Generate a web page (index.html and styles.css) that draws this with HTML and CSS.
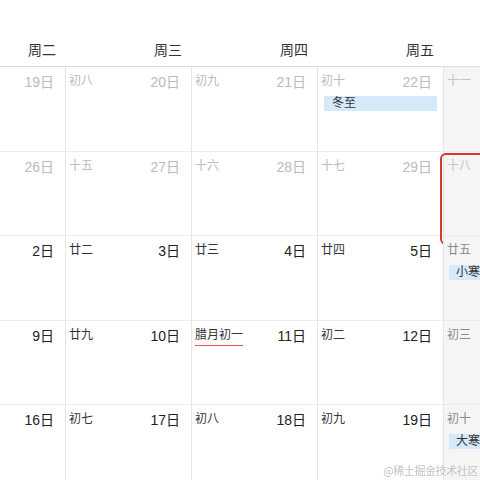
FILE: index.html
```html
<!DOCTYPE html>
<html lang="zh-CN">
  <head>
    <meta charset="UTF-8" />
    <meta name="viewport" content="width=device-width, initial-scale=1.0" />
    <title>月视图</title>
    <link rel="stylesheet" href="styles.css">
  </head>
  <body>
    <div class="calendar">
      <div class="week-head">
        <div class="head-cell">周二</div>
        <div class="head-cell">周三</div>
        <div class="head-cell">周四</div>
        <div class="head-cell">周五</div>
        <div class="head-cell"></div>
      </div>

      <div class="month-grid">
        <!-- 12月 -->
        <div class="day other"><div class="day-top"><span class="lunar"></span><span class="solar">19日</span></div></div>
        <div class="day other"><div class="day-top"><span class="lunar">初八</span><span class="solar">20日</span></div></div>
        <div class="day other"><div class="day-top"><span class="lunar">初九</span><span class="solar">21日</span></div></div>
        <div class="day other">
          <div class="day-top"><span class="lunar">初十</span><span class="solar">22日</span></div>
          <div class="event">冬至</div>
        </div>
        <div class="day other weekend"><div class="day-top"><span class="lunar">十一</span></div></div>

        <div class="day other"><div class="day-top"><span class="lunar"></span><span class="solar">26日</span></div></div>
        <div class="day other"><div class="day-top"><span class="lunar">十五</span><span class="solar">27日</span></div></div>
        <div class="day other"><div class="day-top"><span class="lunar">十六</span><span class="solar">28日</span></div></div>
        <div class="day other"><div class="day-top"><span class="lunar">十七</span><span class="solar">29日</span></div></div>
        <div class="day other weekend selected">
          <div class="day-top"><span class="lunar">十八</span></div>
          <div class="select-box"></div>
        </div>

        <!-- 1月 -->
        <div class="day"><div class="day-top"><span class="lunar"></span><span class="solar">2日</span></div></div>
        <div class="day"><div class="day-top"><span class="lunar">廿二</span><span class="solar">3日</span></div></div>
        <div class="day"><div class="day-top"><span class="lunar">廿三</span><span class="solar">4日</span></div></div>
        <div class="day"><div class="day-top"><span class="lunar">廿四</span><span class="solar">5日</span></div></div>
        <div class="day weekend">
          <div class="day-top"><span class="lunar">廿五</span></div>
          <div class="event">小寒</div>
        </div>

        <div class="day"><div class="day-top"><span class="lunar"></span><span class="solar">9日</span></div></div>
        <div class="day"><div class="day-top"><span class="lunar">廿九</span><span class="solar">10日</span></div></div>
        <div class="day"><div class="day-top"><span class="lunar month-start">腊月初一</span><span class="solar">11日</span></div></div>
        <div class="day"><div class="day-top"><span class="lunar">初二</span><span class="solar">12日</span></div></div>
        <div class="day weekend"><div class="day-top"><span class="lunar">初三</span></div></div>

        <div class="day"><div class="day-top"><span class="lunar"></span><span class="solar">16日</span></div></div>
        <div class="day"><div class="day-top"><span class="lunar">初七</span><span class="solar">17日</span></div></div>
        <div class="day"><div class="day-top"><span class="lunar">初八</span><span class="solar">18日</span></div></div>
        <div class="day"><div class="day-top"><span class="lunar">初九</span><span class="solar">19日</span></div></div>
        <div class="day weekend">
          <div class="day-top"><span class="lunar">初十</span></div>
          <div class="event">大寒</div>
        </div>
      </div>
    </div>

    <div class="watermark">@稀土掘金技术社区</div>
  </body>
</html>
```

FILE: styles.css
```css
html,
body {
  margin: 0;
  padding: 0;
  height: 100%;
  overflow: hidden;
  background-color: #fff;
}
body {
  font-family: "Liberation Sans", "Noto Sans CJK SC", sans-serif;
  color: #222;
}
.calendar {
  margin-left: -61px;
  width: 630px;
}
.week-head {
  display: grid;
  grid-template-columns: repeat(5, 126px);
  height: 66px;
  border-bottom: 1px solid #dcdcdc;
}
.head-cell {
  padding: 40px 9px 0 0;
  font-size: 14px;
  line-height: 20px;
  text-align: right;
  color: #333;
}
.month-grid {
  display: grid;
  grid-template-columns: repeat(5, 126px);
  grid-auto-rows: 84.5px;
}
.day {
  position: relative;
  box-sizing: border-box;
  padding: 5px 11px 0 3px;
  border-left: 1px solid #e4e4e4;
  border-bottom: 1px solid #ececec;
}
.day.weekend {
  background-color: #f5f5f5;
}
.day-top {
  display: flex;
  justify-content: space-between;
  align-items: flex-start;
  height: 20px;
}
.lunar {
  font-size: 12px;
  line-height: 18px;
  color: #333;
}
.solar {
  font-size: 14px;
  line-height: 20px;
  color: #222;
}
.weekend .lunar {
  color: #8a8a8a;
}
.other .lunar,
.other .solar {
  color: #bbb;
}
.other.weekend .lunar {
  color: #c4c4c4;
}
.month-start {
  padding-bottom: 1px;
  border-bottom: 1px solid #e5544c;
}
.event {
  margin: 4px -5px 0 3px;
  padding-left: 8px;
  height: 15px;
  font-size: 12px;
  line-height: 15px;
  color: #333;
  background-color: #d6e9fb;
}
.weekend .event {
  margin-left: 2px;
  padding-left: 7px;
}
.select-box {
  position: absolute;
  left: -4px;
  top: 1px;
  width: 80px;
  height: 88px;
  border: 2px solid #d6392e;
  border-radius: 6px;
}
.watermark {
  position: fixed;
  right: 2px;
  bottom: 3px;
  font-family: "Noto Sans CJK SC", sans-serif;
  font-size: 11px;
  line-height: 14px;
  color: #c2c2c2;
  letter-spacing: -0.4px;
}
```
